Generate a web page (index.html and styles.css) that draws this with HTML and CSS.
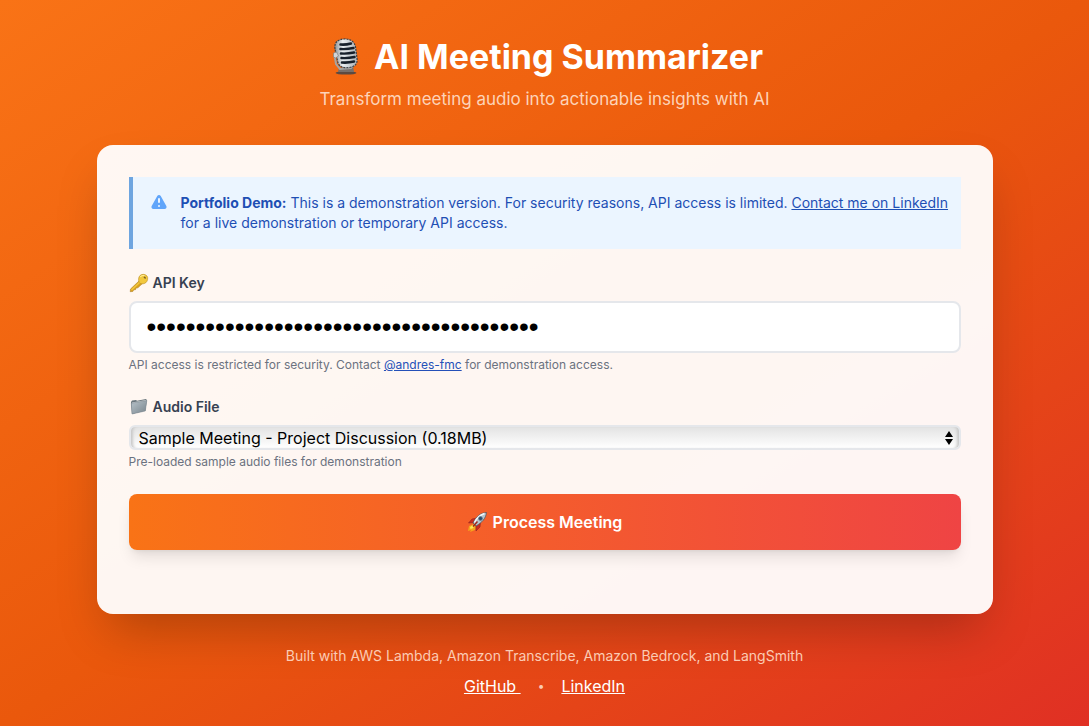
FILE: index.html
```html
<!DOCTYPE html>
<html lang="en">
<head>
<meta charset="utf-8">
<meta name="viewport" content="width=device-width, initial-scale=1">
<title>AI Meeting Summarizer</title>
<link rel="stylesheet" href="styles.css">
</head>
<body>
<div class="page">
  <header class="header">
    <h1 class="title">
      <svg class="icon-mic" viewBox="0 0 36 40" aria-hidden="true">
        <defs>
          <linearGradient id="mic" x1="0" x2="1"><stop offset="0" stop-color="#8d9195"/><stop offset=".35" stop-color="#e9edf0"/><stop offset="1" stop-color="#a9b0b6"/></linearGradient>
        </defs>
        <ellipse cx="20" cy="36" rx="10.500" ry="1.600" fill="#5b4a42"/>
        <path d="M13 31l14-2 1 6H12z" fill="#77706c"/>
        <path d="M8.500 18l1.500 9 4 5 11-1 4-5" fill="none" stroke="#a6a4a2" stroke-width="2"/>
        <path d="M9 12C8 5 12 2.500 18 2S28.500 4.500 29.500 10l1.500 11c.8 6-2 8.500-7.500 9.500-7 1-11-1-12-6.500z" fill="url(#mic)" stroke="#3a4047" stroke-width="1.200" stroke-dasharray="2 1"/>
        <path d="M14.500 7.500q5 .5 10.500-1M14.500 12q6 .5 13-1M15 16.500q6 .5 13-1M15.500 21q6 .5 13-1M16 25.500q6 .5 12-1" fill="none" stroke="#17202b" stroke-width="2.500" stroke-linecap="round"/>
        <path d="M7.500 16l3-1 2 4-3 2-2-1z" fill="#d3d5d7" stroke="#73777a" stroke-width=".6"/>
      </svg>
      <span>AI Meeting Summarizer</span>
    </h1>
    <p class="subtitle">Transform meeting audio into actionable insights with AI</p>
  </header>

  <main class="card">
    <div class="notice">
      <svg class="icon-warn" viewBox="0 0 20 20" aria-hidden="true"><path fill="#60a5fa" fill-rule="evenodd" d="M8.257 3.099c.765-1.360 2.722-1.360 3.486 0l5.580 9.920c.750 1.334-.213 2.980-1.742 2.980H4.420c-1.530 0-2.493-1.646-1.743-2.980l5.580-9.920zM11 13a1 1 0 11-2 0 1 1 0 012 0zm-1-8a1 1 0 00-1 1v3a1 1 0 002 0V6a1 1 0 00-1-1z" clip-rule="evenodd"/></svg>
      <p class="notice-text"><strong>Portfolio Demo:</strong> This is a demonstration version. For security reasons, API access is limited. <a href="#linkedin">Contact me on LinkedIn</a> for a live demonstration or temporary API access.</p>
    </div>

    <form class="form">
      <div class="field">
        <label class="label" for="api-key">
          <svg class="icon-label" viewBox="0 0 20 20" aria-hidden="true">
            <path d="M10.500 7.500L1.500 16l-.3 2.700 2.600-.2 1-1.700 1.700-.1.600-1.700 1.800-.2 4.600-4.300z" fill="#d9a01f" stroke="#a87a20" stroke-width=".5"/>
            <path d="M11 2.500c2-1.800 5.500-1.300 7 .5 1.300 1.800.8 5-1.200 6.700-1.700 1.400-4.600 1.600-6.200.2-1.600-1.800-1.300-5.800.4-7.400z" fill="#f2c83e" stroke="#b88b22" stroke-width=".6"/>
            <path d="M11.300 4c1-1.300 3-1.700 4.300-1.200" stroke="#fff0a0" stroke-width="1.200" fill="none"/>
            <ellipse cx="15.800" cy="4.600" rx="1.300" ry=".9" transform="rotate(40 15.800 4.600)" fill="#7b6225"/>
            <path d="M10.500 9.500l-8 7.500" stroke="#f2c83e" stroke-width="1.500"/>
          </svg>
          <span>API Key</span>
        </label>
        <input class="input" id="api-key" type="password" value="demo-key-0123456789-0123456789-012345678" autocomplete="off">
        <p class="help">API access is restricted for security. Contact <a href="#andres">@andres-fmc</a> for demonstration access.</p>
      </div>

      <div class="field">
        <label class="label" for="audio">
          <svg class="icon-label" viewBox="0 0 20 20" aria-hidden="true">
            <defs><linearGradient id="folder" x1="0" y1="0" x2="1" y2="1"><stop offset="0" stop-color="#b9c4cb"/><stop offset="1" stop-color="#78848c"/></linearGradient></defs>
            <path d="M2 5l1-1.500 4-.5 1 .8 9-1.800.8 1-1.300 10.500L3 17z" fill="#69757c"/>
            <path d="M3 5.500l14-2.500.5 1-1.200 9.300L3 16.500z" fill="#e1e4e4"/>
            <path d="M2.300 6.200l15.500-2.700-1.500 10.500L3 17z" fill="url(#folder)" stroke="#75818a" stroke-width=".5"/>
          </svg>
          <span>Audio File</span>
        </label>
        <div class="select-wrap">
          <select class="select" id="audio"><option>Sample Meeting - Project Discussion (0.18MB)</option></select>
          <svg class="select-arrows" viewBox="0 0 8 16" aria-hidden="true"><path d="M4 1l4 6H0zM4 15l4-6H0z"/></svg>
        </div>
        <p class="help">Pre-loaded sample audio files for demonstration</p>
      </div>

      <button class="submit" type="submit">
        <svg class="icon-rocket" viewBox="0 0 20 20" aria-hidden="true">
          <path d="M7 12l-5 2-1 5 3-1-1 2 5-2 2-4z" fill="#f4a51c"/>
          <path d="M6 13l-3 2 .5 2 3-1z" fill="#ffe75a"/>
          <path d="M10 6L5 7 1.500 11l6-.5zM13.500 10l-.5 5-4 4-.2-6z" fill="#c92a20" stroke="#7e2020" stroke-width=".5"/>
          <path d="M19.500.5C14 .8 9.500 4 6 11l3 3c6-3.500 9.800-7.500 10.500-13.500z" fill="#b5c3cd" stroke="#46515b" stroke-width=".7"/>
          <path d="M17.500 1.500C13 3 9.500 6 7.500 10.500" stroke="#f5f8fa" stroke-width="1.500" fill="none"/>
          <circle cx="13.500" cy="6.500" r="1.900" fill="#284e75" stroke="#65747e" stroke-width=".7"/>
          <path d="M10.500 9.500l-4.500 5" stroke="#9f251c" stroke-width="1.500"/>
        </svg>
        <span>Process Meeting</span>
      </button>
    </form>
  </main>

  <footer class="footer">
    <p class="built">Built with AWS Lambda, Amazon Transcribe, Amazon Bedrock, and LangSmith</p>
    <nav class="links"><a class="link-github" href="#github">GitHub </a><span class="dot">•</span><a href="#linkedin">LinkedIn</a></nav>
  </footer>
</div>
</body>
</html>
```

FILE: styles.css
```css
* { box-sizing: border-box; margin: 0; }

body {
  min-height: 100vh;
  font-family: Inter, "Liberation Sans", sans-serif;
  font-size: 16px;
  line-height: 24px;
  background: linear-gradient(to bottom right, #f97316, #ea580c, #e03024);
}

.page {
  max-width: 896px;
  margin: 0 auto;
  padding: 37px 0 24px;
}

.header { margin-bottom: 32px; text-align: center; }

.title {
  display: flex;
  justify-content: center;
  align-items: center;
  gap: 12px;
  margin-bottom: 8px;
  font-size: 34px;
  line-height: 40px;
  font-weight: 700;
  color: #fff;
}

.icon-mic { width: 36px; height: 40px; }

.subtitle { font-size: 17px; line-height: 28px; color: #fdd3b8; }

.card {
  padding: 32px 32px 64px;
  border-radius: 16px;
  background: rgba(255, 255, 255, 0.95);
  box-shadow: 0 25px 50px -12px rgba(0, 0, 0, 0.25);
}

.notice {
  display: flex;
  gap: 12px;
  margin-bottom: 24px;
  padding: 16px 8px 16px 16px;
  border-left: 4px solid #6ea5e0;
  background: #ebf5ff;
}

.icon-warn { flex: none; width: 20px; height: 20px; }

.notice-text { font-size: 14px; line-height: 20px; color: #1e4fb4; }
.notice-text strong { font-weight: 700; }
.notice a { color: inherit; }

.form { display: grid; gap: 24px; }
.field { display: grid; }

.label {
  display: flex;
  align-items: center;
  gap: 4px;
  margin-bottom: 8px;
  font-size: 14px;
  line-height: 20px;
  font-weight: 600;
  color: #374151;
}

.icon-label { width: 20px; height: 20px; }

.input {
  width: 100%;
  height: 52px;
  padding: 0 16px;
  border: 2px solid #e5e7eb;
  border-radius: 8px;
  background: #fff;
  color: #000;
  font-family: "Liberation Sans", Arial, sans-serif;
  font-size: 28px;
}

.help { margin-top: 4px; font-size: 12px; line-height: 16px; color: #6b7280; }
.help a { color: #2450b8; }

.select-wrap { display: grid; align-items: center; }
.select-wrap > * { grid-area: 1 / 1; }

.select {
  appearance: none;
  width: 100%;
  height: 25px;
  padding: 0 24px 0 8px;
  border: 2px solid #e5e7eb;
  border-radius: 6px;
  background: linear-gradient(to bottom, #e3e3e3, #fff);
  box-shadow: inset 4px 0 3px -2px #c8c8c8, inset -4px 0 3px -2px #c8c8c8;
  color: #000;
  font: inherit;
  line-height: 20px;
}

.select-arrows {
  justify-self: end;
  width: 8px;
  height: 16px;
  margin-right: 8px;
  pointer-events: none;
}

.submit {
  display: flex;
  justify-content: center;
  align-items: center;
  gap: 6px;
  padding: 16px 24px;
  border: 0;
  border-radius: 8px;
  background: linear-gradient(to right, #f97316, #ef4444);
  box-shadow: 0 10px 15px -3px rgba(0, 0, 0, 0.1), 0 4px 6px -4px rgba(0, 0, 0, 0.1);
  color: #fff;
  font: inherit;
  font-weight: 600;
}

.icon-rocket { width: 20px; height: 20px; }

.footer { margin-top: 32px; text-align: center; color: #fbcbb4; }
.built { margin-bottom: 8px; font-size: 14px; line-height: 20px; }
.links { display: flex; justify-content: center; gap: 17px; }
.links a { color: #fff; }
.link-github { white-space: pre; }
.dot { font-size: 12px; }
```
